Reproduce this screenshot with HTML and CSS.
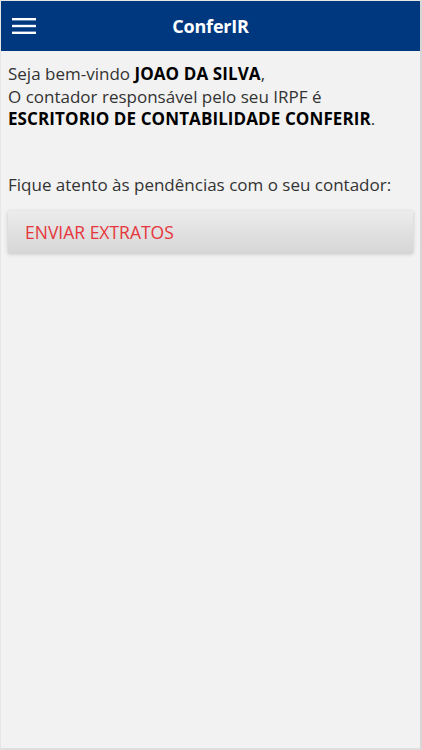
FILE: index.html
```html
<!DOCTYPE html>
<html lang="pt-BR">
<head>
    <meta charset="UTF-8">
    <meta name="viewport" content="width=device-width, initial-scale=1.0">
    <title>ConferIR</title>
    <link rel="stylesheet" href="styles.css">
</head>
<body>
    <div class="app">
        <header class="topbar">
            <button class="menu-btn" aria-label="Menu">
                <svg width="24" height="16" viewBox="0 0 24 16">
                    <rect x="0" y="0" width="24" height="2.4" fill="#fff"/>
                    <rect x="0" y="6.8" width="24" height="2.4" fill="#fff"/>
                    <rect x="0" y="13.6" width="24" height="2.4" fill="#fff"/>
                </svg>
            </button>
            <h1 class="title">ConferIR</h1>
        </header>

        <main class="content">
            <p class="welcome">
                Seja bem-vindo <strong>JOAO DA SILVA</strong>,<br>
                O contador responsável pelo seu IRPF é<br>
                <strong>ESCRITORIO DE CONTABILIDADE CONFERIR</strong>.
            </p>

            <p class="notice">Fique atento às pendências com o seu contador:</p>

            <ul class="pending-list">
                <li class="pending-item">ENVIAR EXTRATOS</li>
            </ul>
        </main>
    </div>
</body>
</html>
```

FILE: styles.css
```css
html, body {
    height: 100%;
}

body {
    margin: 0;
    background-color: #f2f2f2;
    font-family: 'Open Sans', 'Noto Sans', sans-serif;
    color: #333;
}

.app {
    box-sizing: border-box;
    height: 750px;
    border-top: 1px solid #e6e6e6;
    border-left: 1px solid #e6e6e6;
    border-right: 2px solid #d6d6d6;
    border-bottom: 2px solid #dedede;
    background-color: #f2f2f2;
    display: flex;
    flex-direction: column;
}

.topbar {
    position: relative;
    height: 50px;
    background-color: #003880;
    display: flex;
    align-items: center;
    justify-content: center;
}

.menu-btn {
    position: absolute;
    left: 11px;
    top: 17px;
    padding: 0;
    border: none;
    background: none;
    display: flex;
}

.title {
    margin: 0;
    color: #fff;
    font-size: 18px;
    font-weight: bold;
    letter-spacing: -0.2px;
}

.content {
    padding: 12px 7px;
}

.welcome {
    margin: 0;
    font-size: 17px;
    line-height: 22.5px;
}

.welcome strong {
    color: #000;
    letter-spacing: 0.1px;
}

.notice {
    margin: 43px 0 0;
    font-size: 17px;
    line-height: 22px;
}

.pending-list {
    list-style: none;
    margin: 15px 0 0;
    padding: 0;
}

.pending-item {
    height: 42px;
    line-height: 42px;
    padding-left: 17px;
    font-size: 17.5px;
    color: #e6363c;
    background: linear-gradient(#ececec, #d6d6d6);
    box-shadow: 0 1px 4px rgba(0, 0, 0, 0.2);
}
```
